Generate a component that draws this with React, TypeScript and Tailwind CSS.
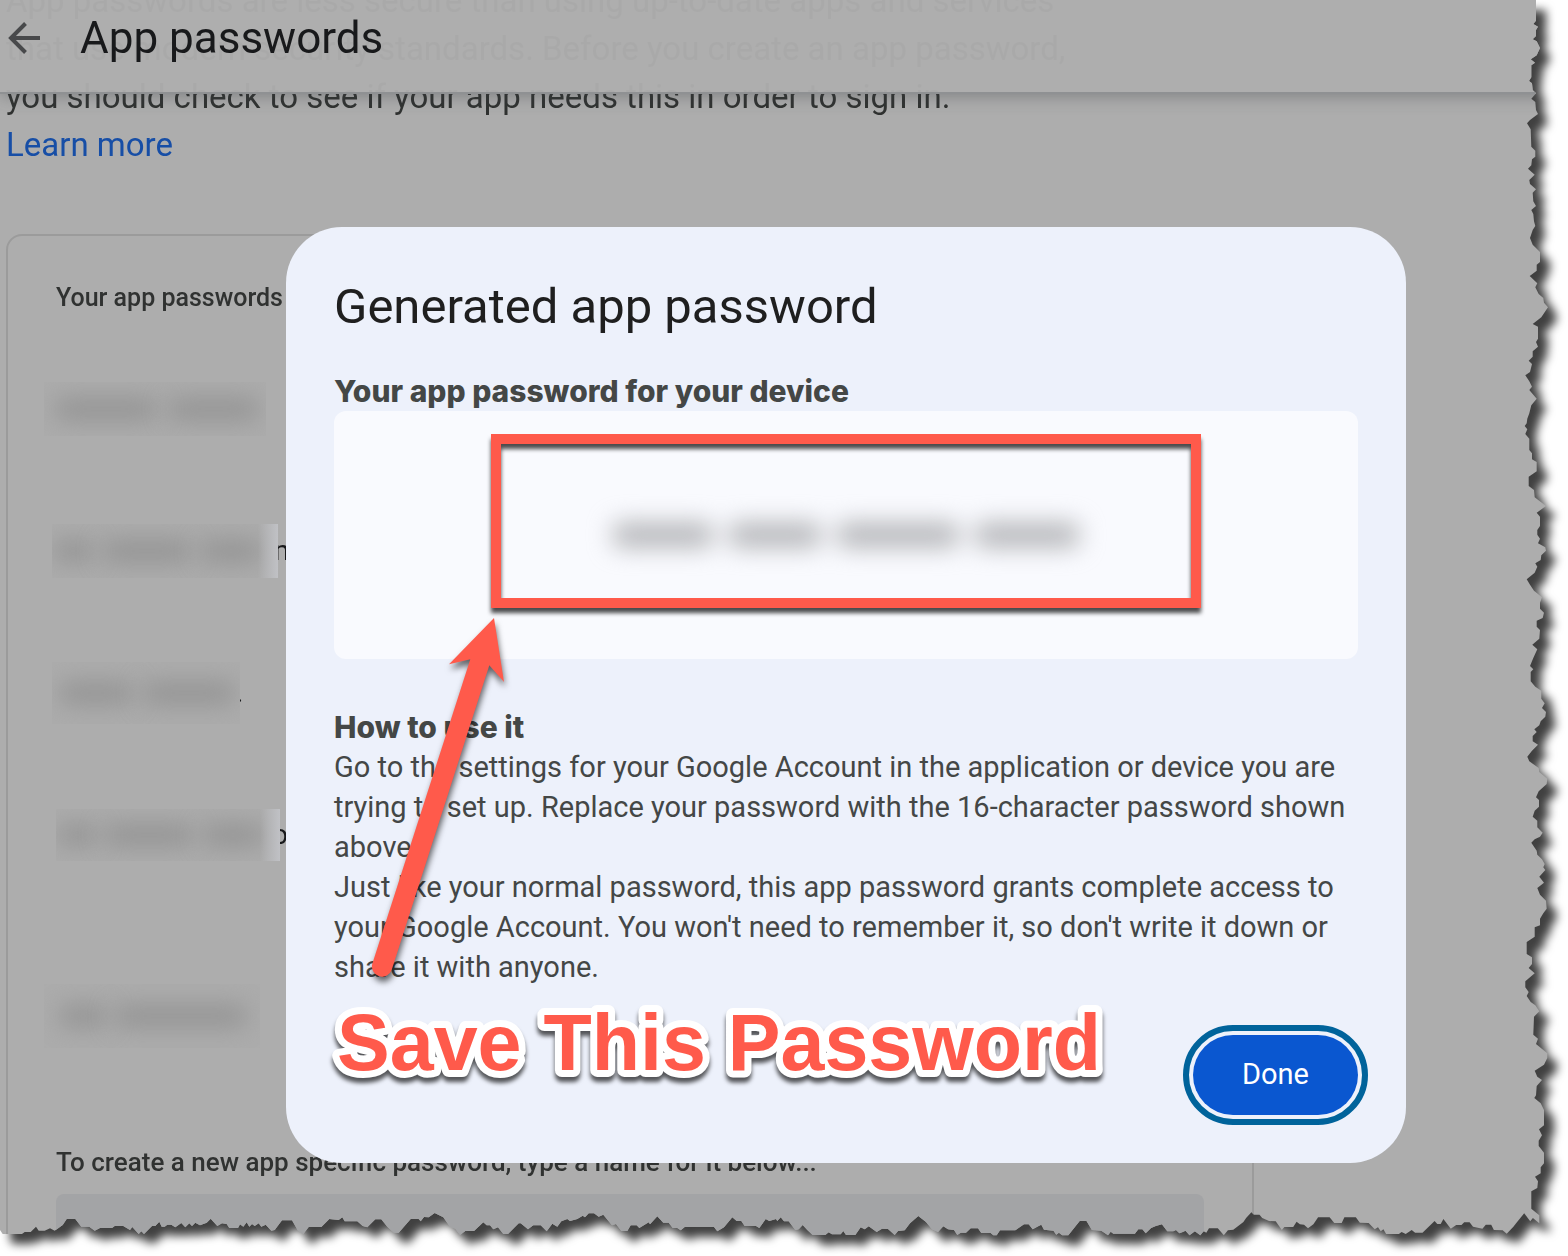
import type { CSSProperties } from 'react';

type Point = [number, number];

const parse = (text: string): Point[] =>
  text
    .trim()
    .split(/\s+/)
    .map((pair) => pair.split(',').map(Number) as Point);

/* Torn right edge, top to bottom, in thirds of a pixel: x from 100px inside the right side, y from each start. */
const RIGHT_EDGE = [
  {
    y: 0,
    points: parse(`204,0 204,62 196,72 210,80 204,90 204,108 194,118 206,124 216,144 206,166 188,178 201,188
      190,196 190,232 183,243 192,250 194,270 204,280 190,296 202,306 204,330 210,342 186,360 177,370 188,388
      190,440 202,452 202,470 192,478 190,496 180,506 200,524 184,540 186,552 204,568 194,578 196,604 204,618
      190,630 196,642 198,664 202,678 194,690 186,714 194,734 216,756 216,786 206,794 206,812 185,828 208,850
      202,862 212,882 226,894 228,908 240,922 220,952 194,972 210,980 210,1016 204,1026 210,1040 194,1054
      194,1070 182,1082 192,1092 186,1116 172,1126 184,1144 192,1160 184,1170 206,1196 190,1216 184,1240 178,1256`),
  },
  {
    y: 420,
    points: parse(`176,10 170,18 178,28 172,42 184,56 184,90 192,100 192,118 206,126 206,154 182,170 182,198
      198,210 200,232 234,258 206,278 216,290 216,318 208,330 208,344 216,356 210,370 232,382 234,392 220,406
      218,420 202,430 208,440 200,458 176,478 186,494 198,512 222,532 216,548 216,566 228,578 224,594 206,602
      206,620 216,630 214,656 193,674 208,688 196,714 186,738 196,748 188,756 188,784 202,800 220,812 220,836
      230,850 222,864 234,876 232,890 218,904 214,916 199,928 206,936 194,948 194,964 210,974 192,992 178,1010
      184,1024 212,1044 214,1056 238,1076 236,1092 212,1114 204,1132 213,1140 213,1160 200,1172 194,1190
      208,1202 208,1222 224,1238 216,1250 200,1258`),
  },
  {
    y: 840,
    points: parse(`190,8 206,32 208,44 222,58 230,72 226,82 232,90 214,110 228,128 208,144 216,164 234,182
      236,206 226,220 216,236 216,256 200,262 200,290 176,306 176,342 192,352 192,372 182,384 200,400 172,424
      172,442 182,456 176,468 188,486 202,496 214,514 198,530 196,584 210,596 204,612 238,640 238,654 228,674
      200,692 208,710 222,720 206,738 204,766 199,774 218,790 228,810 228,856 213,868 222,886 212,902 212,918
      228,938 228,970 218,982 218,1000 201,1010 210,1024 208,1044 190,1054 190,1106 214,1126 214,1150`),
  },
];

/* Torn bottom edge, left to right: x from each start, y down from 136px above the bottom. */
const BOTTOM_EDGE = [
  {
    x: 0,
    scale: 3,
    points: parse(`0,330 8,342 66,342 74,336 92,336 108,320 116,332 134,332 150,325 164,332 188,315 200,297
      226,297 244,320 268,320 284,332 300,324 336,324 344,318 370,318 390,330 397,321 416,342 424,334 432,342
      456,318 466,318 478,305 485,320 494,320 502,314 514,314 526,322 544,309 556,322 568,310 576,318 586,308
      600,316 620,308 632,296 652,318 666,310 680,312 688,324 714,324 720,313 730,320 740,307 748,320 756,312
      764,318 776,310 784,320 797,314 814,332 824,330 846,301 876,301 894,332 910,342 926,321 964,321 988,297
      1016,300 1027,292 1034,304 1072,304 1088,318 1102,322 1126,298 1144,298 1162,320 1182,338 1196,338
      1232,297 1256,297 1262,304 1272,291 1286,292 1304,279 1330,292 1350,320 1366,326 1380,345 1396,333
      1422,333 1450,307 1460,316 1470,316 1480,328 1494,322 1510,342 1524,342 1556,310`),
  },
  {
    x: 520,
    scale: 3,
    points: parse(`2,310 24,328 40,316 62,316 80,334 97,311 112,320 124,304 142,297 150,303 172,297 188,287
      195,292 206,280 222,280 236,290 250,284 276,316 288,312 304,333 322,333 332,316 350,316 358,324 386,307
      390,313 412,289 430,308 446,308 458,324 472,324 482,331 494,321 582,321 592,334 612,322 637,292 650,303
      664,303 674,318 708,318 718,324 737,297 748,303 768,297 772,303 782,292 792,304 806,304 826,330 836,328
      848,315 862,330 878,345 916,345 926,337 936,343 962,343 970,333 978,345 1006,345 1022,322 1034,328
      1046,319 1070,336 1086,326 1104,327 1124,345 1134,333 1154,331 1170,310 1195,288 1218,306 1236,328
      1254,336 1270,319 1284,328 1302,330 1312,345 1322,338 1338,338 1352,325 1374,325 1384,339 1412,339
      1420,346 1430,346 1440,331 1486,331 1512,313 1526,313 1538,328 1556,318`),
  },
  {
    x: 1040,
    scale: 2.97,
    points: parse(`4,314 12,329 40,332 48,344 56,338 66,346 84,346 118,303 138,303 154,330 182,332 202,346
      210,335 218,341 282,341 292,328 304,328 314,340 330,324 344,318 362,313 378,334 396,334 404,330 414,340
      424,336 432,332 444,346 460,334 476,346 486,334 494,338 502,325 528,325 546,346 558,331 574,329 604,306
      612,294 628,277 636,284 652,284 660,294 680,303 700,304 718,330 726,321 752,321 762,305 772,313 784,314
      796,325 812,313 826,292 860,292 874,309 896,309 904,292 938,292 950,308 976,309 994,328 1004,322
      1012,334 1020,328 1028,342 1066,342 1074,336 1086,342 1104,330 1114,338 1136,338 1172,303 1180,312
      1190,312 1198,297 1220,326 1236,315 1252,315 1260,307 1276,307 1286,320 1314,326 1324,314 1340,314
      1348,330 1374,331 1386,341 1406,320 1414,310 1438,280 1456,304 1464,294`),
  },
];

const n = (v: number) => v.toFixed(1);

const tornOutline: CSSProperties = {
  clipPath: `polygon(${[
    '0 0',
    ...RIGHT_EDGE.flatMap(({ y, points }) =>
      points.map(([px, py]) => `calc(100% - ${n(100 - px / 3)}px) ${n(y + py / 3)}px`),
    ),
    ...BOTTOM_EDGE.flatMap(({ x, scale, points }) =>
      points.map(([px, py]) => `${n(x + px / scale)}px calc(100% - ${n(136 - py / 3)}px)`),
    ).reverse(),
  ].join(', ')})`,
};

type Smudge = { width: number; height: number; blobs: [number, number][]; glow?: boolean };

const ROWS: { id: string; item: string; smudge: Smudge; tail?: string; tailStyle?: string }[] = [
  { id: 'a', item: 'h-[142px]', smudge: { width: 222, height: 54, blobs: [[10, 104], [124, 92]] } },
  {
    id: 'b',
    item: 'h-[142px] pl-2',
    smudge: { width: 226, height: 54, blobs: [[0, 42], [50, 90], [148, 62]], glow: true },
    tail: 'm',
    tailStyle: '-ml-1',
  },
  {
    id: 'c',
    item: 'h-[142px] pl-2',
    smudge: { width: 188, height: 62, blobs: [[6, 76], [90, 94]] },
    tail: '.',
    tailStyle: '-ml-1',
  },
  {
    id: 'd',
    item: 'h-[142px] pl-3',
    smudge: { width: 224, height: 52, blobs: [[0, 42], [48, 90], [146, 62]], glow: true },
    tail: 'o',
    tailStyle: '-ml-2',
  },
  { id: 'e', item: 'h-[220px]', smudge: { width: 216, height: 64, blobs: [[14, 50], [70, 134]] } },
];

function Redacted({ width, height, blobs, glow }: Smudge) {
  return (
    <span className="relative z-10 block shrink-0 overflow-hidden bg-[#acacac]" style={{ width, height }}>
      {blobs.map(([left, size]) => (
        <span
          key={left}
          className="absolute top-1/2 block h-5 -translate-y-1/2 rounded-full bg-[#919191] blur-[12px]"
          style={{ left, width: size }}
        />
      ))}
      {glow && <span className="absolute inset-y-0 right-0 block w-5 bg-linear-to-r from-transparent to-[#c0c1c5]" />}
    </span>
  );
}

function BackArrow() {
  return (
    <svg viewBox="0 0 32 32" className="size-8" fill="none" stroke="#48494b" strokeWidth="4" aria-hidden="true">
      <path d="M32 16H3" />
      <path d="M17.5 1.5 3 16l14.5 14.5" />
    </svg>
  );
}

function PointerArrow() {
  return (
    <svg
      viewBox="0 0 160 380"
      className="pointer-events-none absolute top-[383px] left-[74px] h-[380px] w-[160px] overflow-visible drop-shadow-[1px_5px_3px_rgba(0,0,0,0.6)]"
      aria-hidden="true"
    >
      <path
        d="M134 8 89 54.3 110.3 49.3 12.4 353.5A10 10 0 0 0 31.8 359.5L129.3 55.3 144 72Z"
        fill="#ff5a4b"
      />
    </svg>
  );
}

function Callout() {
  return (
    <svg
      viewBox="0 0 800 100"
      className="pointer-events-none absolute top-[768px] left-10 h-[100px] w-[800px] overflow-visible drop-shadow-[0_5px_2px_rgba(0,0,0,0.65)]"
    >
      <text
        x="11"
        y="75"
        className="fill-[#ff5a4b] stroke-white stroke-[14px] font-['Liberation_Sans',sans-serif] text-[79px] font-bold [paint-order:stroke_fill] [stroke-linejoin:round]"
      >
        Save This Password
      </text>
    </svg>
  );
}

function GeneratedDialog() {
  return (
    <div className="absolute inset-0 z-30 flex items-start justify-center pt-[227px] pl-[124px]">
      <section
        role="dialog"
        aria-modal="true"
        aria-labelledby="dialog-title"
        className="relative flex w-[1120px] max-w-full flex-col rounded-[56px] bg-[#edf1fb] p-12 text-[#444746]"
      >
        <h2 id="dialog-title" className="text-[49px] leading-[64px] text-[#1f1f1f]">
          Generated app password
        </h2>
        <h3 className="mt-8 font-['Inter',sans-serif] text-[30px] leading-10 font-extrabold">
          Your app password for your device
        </h3>
        <div className="grid h-[248px] place-items-center rounded-xl bg-[#f9fafe]">
          <div
            className="col-start-1 row-start-1 flex gap-4 blur-[12px]"
            role="img"
            aria-label="Hidden password"
          >
            <span className="h-6 w-[100px] rounded-lg bg-[#b2b3b6]" />
            <span className="h-6 w-[92px] rounded-lg bg-[#b2b3b6]" />
            <span className="h-6 w-[122px] rounded-lg bg-[#b2b3b6]" />
            <span className="h-6 w-[104px] rounded-lg bg-[#b2b3b6]" />
          </div>
          <div className="col-start-1 row-start-1 mb-7 h-[174px] w-[710px] border-[10px] border-[#ff5a4b] drop-shadow-[0_5px_2px_rgba(0,0,0,0.7)]" />
        </div>
        <h3 className="mt-12 font-['Inter',sans-serif] text-[30px] leading-10 font-extrabold">How to use it</h3>
        <div className="text-[29px] leading-10">
          <p>
            Go to the settings for your Google Account in the application or device you are trying to set up. Replace
            your password with the 16-character password shown above.
          </p>
          <p>
            Just like your normal password, this app password grants complete access to your Google Account. You
            won't need to remember it, so don't write it down or share it with anyone.
          </p>
        </div>
        <div className="mt-12 flex justify-end">
          <button
            type="button"
            className="h-20 min-w-[165px] rounded-full bg-[#0a57d0] px-12 text-[29px] text-white outline-[6px] outline-offset-4 outline-[#00639b]"
          >
            Done
          </button>
        </div>
        <PointerArrow />
        <Callout />
      </section>
    </div>
  );
}

export default function App() {
  return (
    <div className="h-screen overflow-hidden bg-white font-['Roboto',sans-serif]">
      <div className="h-full drop-shadow-[10px_10px_5px_rgba(0,0,0,0.75)]">
        <div className="relative h-full overflow-hidden bg-[#adadad]" style={tornOutline}>
          <header className="absolute inset-x-0 top-0 z-20 flex h-[94px] items-start gap-10 border-b-2 border-[#8f9193] bg-[#adadad]/97 pl-2 shadow-[0_2px_16px_rgba(60,64,67,0.4)]">
            <button type="button" aria-label="Back" className="mt-[22px]">
              <BackArrow />
            </button>
            <h1 className="mt-1.5 text-[44px] leading-[64px] text-[#18191b]">App passwords</h1>
          </header>

          <main className="flex h-full flex-col pl-1.5">
            <p className="mt-[-23px] max-w-[1080px] text-[33px] leading-[48px] text-[#303231]">
              App passwords are less secure than using up-to-date apps and services that use modern security
              standards. Before you create an app password, you should check to see if your app needs this in order
              to sign in.{' '}
              <a href="#learn-more" className="whitespace-nowrap text-[#174ea6]">
                Learn more
              </a>
            </p>

            <section className="mt-[65px] max-w-[1248px] shrink-0 rounded-2xl border-2 border-[#9b9b9b] px-12 pt-[46px] pb-12">
              <h2 className="text-[25px] leading-8 font-medium text-[#303231]">Your app passwords</h2>
              <ul className="mt-6 -ml-3">
                {ROWS.map(({ id, item, smudge, tail, tailStyle }) => (
                  <li key={id} className={`flex items-center ${item}`}>
                    <Redacted {...smudge} />
                    {tail && <span className={`text-[28px] text-[#18191b] ${tailStyle}`}>{tail}</span>}
                  </li>
                ))}
              </ul>
              <label htmlFor="app-name" className="mt-5 block text-[26px] leading-8 font-medium text-[#303231]">
                To create a new app specific password, type a name for it below...
              </label>
              <input id="app-name" type="text" className="mt-4 h-28 w-full rounded-lg bg-[#a3a4a6] px-8 text-[28px]" />
            </section>
          </main>

          <GeneratedDialog />
        </div>
      </div>
    </div>
  );
}
